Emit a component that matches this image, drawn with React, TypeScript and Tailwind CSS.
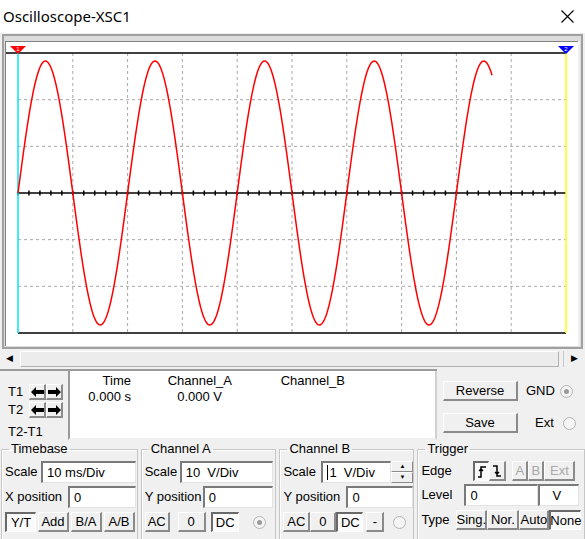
import React from 'react'

const PX0 = 18, PX1 = 566, PY0 = 53, PY1 = 333, MID = 193

function wavePath() {
  const pts: string[] = []
  for (let x = PX0; x <= 492; x += 1) {
    const y = MID - 132 * Math.sin((2 * Math.PI * (x - PX0)) / 109.6)
    pts.push(`${x === PX0 ? 'M' : 'L'}${x},${y.toFixed(2)}`)
  }
  return pts.join(' ')
}

function Screen() {
  const vx = Array.from({ length: 9 }, (_, i) => PX0 + ((PX1 - PX0) / 10) * (i + 1))
  const hy = [1, 2, 4, 5].map((i) => PY0 + ((PY1 - PY0) / 6) * i)
  const ticks = Array.from({ length: 50 }, (_, i) => PX0 + ((PX1 - PX0) / 50) * i)
  return (
    <svg width={572} height={304} viewBox="6 42 572 304" className="block">
      <rect x={6} y={42} width={572} height={304} fill="#fff" />
      {vx.map((x) => (
        <line key={x} x1={x} y1={PY0} x2={x} y2={PY1} stroke="#a8a8a8" strokeDasharray="3 3" />
      ))}
      {hy.map((y) => (
        <line key={y} x1={PX0} y1={y} x2={PX1} y2={y} stroke="#a8a8a8" strokeDasharray="3 3" />
      ))}
      <line x1={6} y1={PY0} x2={PX1} y2={PY0} stroke="#000" strokeWidth={1.5} />
      <line x1={PX0} y1={PY1} x2={PX1} y2={PY1} stroke="#000" strokeWidth={1.5} />
      <line x1={PX0} y1={MID} x2={PX1} y2={MID} stroke="#000" strokeWidth={1.5} />
      {ticks.map((x) => (
        <line key={x} x1={x} y1={MID - 2.5} x2={x} y2={MID + 2.5} stroke="#000" strokeWidth={1.5} />
      ))}
      <line x1={PX0} y1={PY0} x2={PX0} y2={PY1} stroke="#00e5ff" strokeWidth={1.5} />
      <line x1={PX1} y1={PY0} x2={PX1} y2={PY1} stroke="#ffff00" strokeWidth={1.5} />
      <path d={wavePath()} fill="none" stroke="#ff0000" strokeWidth={1.5} />
      <polygon points="10,46 26,46 18,54" fill="#ff0000" />
      <text x={18} y={51} fontSize={6} fill="#fff" textAnchor="middle" fontFamily="Liberation Sans">1</text>
      <polygon points="558,46 574,46 566,54" fill="#0000ff" />
      <text x={566} y={51} fontSize={6} fill="#fff" textAnchor="middle" fontFamily="Liberation Sans">2</text>
    </svg>
  )
}

function Btn({ children, w, pressed, disabled }: { children: React.ReactNode; w: number; pressed?: boolean; disabled?: boolean }) {
  return (
    <div
      style={{ width: w }}
      className={`h-[20px] flex items-center justify-center text-[13px] ${
        pressed
          ? 'bg-[#fafafa] border-t-2 border-l-2 border-b border-r border-t-[#696969] border-l-[#696969] border-b-white border-r-white'
          : 'bg-[#f0f0f0] border-t border-l border-b-2 border-r-2 border-t-white border-l-white border-b-[#8a8a8a] border-r-[#8a8a8a]'
      } ${disabled ? 'text-[#a8a8a8]' : 'text-black'}`}
    >
      {children}
    </div>
  )
}

function Field({ w, children, cursor }: { w: number; children?: React.ReactNode; cursor?: boolean }) {
  return (
    <div
      style={{ width: w }}
      className="h-[22px] bg-white border-t-2 border-l-2 border-b border-r border-t-[#7a7a7a] border-l-[#7a7a7a] border-b-[#e3e3e3] border-r-[#e3e3e3] flex items-center pl-[4px] text-[13px]"
    >
      {cursor && <span className="w-px h-[15px] bg-black mr-px" />}
      {children}
    </div>
  )
}

function Radio({ checked }: { checked?: boolean }) {
  return (
    <div className="w-[13px] h-[13px] rounded-full border border-[#b4b4b4] bg-[#f4f4f4] flex items-center justify-center">
      {checked && <div className="w-[5px] h-[5px] rounded-full bg-[#9a9a9a]" />}
    </div>
  )
}

function Group({ title, w, children }: { title: string; w: number; children: React.ReactNode }) {
  return (
    <fieldset style={{ width: w }} className="border border-b-0 border-[#c6c6c6] pt-[2px] pl-[3px] shadow-[inset_1px_1px_0_#fff]">
      <legend className="ml-[4px] px-[2px] text-[13px] leading-[14px]">{title}</legend>
      {children}
    </fieldset>
  )
}

function ArrowPair() {
  return (
    <div className="flex">
      {['←', '→'].map((a) => (
        <div key={a} className="w-[17px] h-[16px] bg-[#f0f0f0] border-t border-l border-b-2 border-r-2 border-t-white border-l-white border-b-[#8a8a8a] border-r-[#8a8a8a] flex items-center justify-center">
          <svg width={13} height={10} viewBox="0 0 13 10">
            {a === '←' ? (
              <path d="M0 5 L5 0 L5 3 L13 3 L13 7 L5 7 L5 10 Z" fill="#000" />
            ) : (
              <path d="M13 5 L8 0 L8 3 L0 3 L0 7 L8 7 L8 10 Z" fill="#000" />
            )}
          </svg>
        </div>
      ))}
    </div>
  )
}

export default function App() {
  return (
    <div className="w-[585px] h-[539px] overflow-hidden bg-[#f0f0f0] flex flex-col font-['Liberation_Sans',Arial,sans-serif] text-[13px] text-black">
      {/* title bar */}
      <div className="h-[33px] shrink-0 bg-white flex items-center justify-between pl-[3px] pr-[11px]">
        <span className="font-['Noto_Sans',sans-serif] text-[15px] text-black">Oscilloscope-XSC1</span>
        <svg width={13} height={13} viewBox="0 0 13 13">
          <path d="M0.5 0.5 L12.5 12.5 M12.5 0.5 L0.5 12.5" stroke="#000" strokeWidth={1.1} />
        </svg>
      </div>

      {/* screen frame */}
      <div className="mt-px mx-[2px] shrink-0 border-[2px] border-[#a0a0a0]">
        <div className="border border-[#dcdcdc] border-t-[5px]">
          <div className="border-t-[1px] border-l-[1px] border-[#808080] w-fit">
            <Screen />
          </div>
        </div>
      </div>

      {/* scrollbar */}
      <div className="mt-[2px] h-[16px] shrink-0 flex">
        <div className="w-[18px] flex items-center justify-center text-[9px]">◀</div>
        <div className="flex-1 ml-[2px] bg-[#ececec] border-t border-l border-b border-r border-t-white border-l-white border-b-[#b0b0b0] border-r-[#b0b0b0]" />
        <div className="w-[22px] ml-[4px] flex items-center justify-center text-[9px] border-l border-[#c8c8c8]">▶</div>
      </div>

      {/* cursor readout */}
      <div className="mt-[2px] h-[71px] shrink-0 flex">
        <div className="w-[437px] flex border-t-2 border-[#9a9a9a]">
          <div className="w-[68px] flex flex-col pl-[8px] pt-[12px] text-[13px]">
            <div className="flex items-center gap-[4px] h-[18px]"><span className="w-[17px]">T1</span><ArrowPair /></div>
            <div className="flex items-center gap-[4px] h-[18px]"><span className="w-[17px]">T2</span><ArrowPair /></div>
            <div className="mt-[3px]">T2-T1</div>
          </div>
          <div className="flex-1 bg-white border-l-2 border-b-2 border-r-2 border-l-[#9a9a9a] border-r-[#d0d0d0] border-b-[#f0f0f0] grid grid-cols-[61px_101px_113px] content-start pt-[2px] text-[13px] leading-[16px]">
            <div className="text-right">Time</div>
            <div className="text-right">Channel_A</div>
            <div className="text-right">Channel_B</div>
            <div className="text-right">0.000 s</div>
            <div className="text-right pr-[10px]">0.000 V</div>
            <div />
          </div>
        </div>
        <div className="flex-1 flex flex-col pl-[6px] pt-[12px] gap-[12px]">
          <div className="flex items-center">
            <Btn w={75}>Reverse</Btn>
            <span className="ml-[8px]">GND</span>
            <div className="ml-[5px]"><Radio checked /></div>
          </div>
          <div className="flex items-center">
            <Btn w={75}>Save</Btn>
            <span className="ml-[17px]">Ext</span>
            <div className="ml-[9px]"><Radio /></div>
          </div>
        </div>
      </div>

      {/* control groups */}
      <div className="mt-[2px] flex-1 flex gap-[3px] pl-[1px]">
        <Group title="Timebase" w={137}>
          <div className="flex items-center mt-[3px]"><span className="w-[36px]">Scale</span><Field w={95}>10 ms/Div</Field></div>
          <div className="flex items-center mt-[3px]"><span className="w-[63px]">X position</span><Field w={68}>0</Field></div>
          <div className="flex gap-[2px] mt-[4px]">
            <Btn w={31} pressed>Y/T</Btn><Btn w={31}>Add</Btn><Btn w={31}>B/A</Btn><Btn w={31}>A/B</Btn>
          </div>
        </Group>
        <Group title="Channel A" w={136}>
          <div className="flex items-center mt-[3px]"><span className="w-[35px]">Scale</span><Field w={93}>10&nbsp;&nbsp;V/Div</Field></div>
          <div className="flex items-center mt-[3px]"><span className="w-[58px]">Y position</span><Field w={70}>0</Field></div>
          <div className="flex items-center mt-[4px]">
            <Btn w={25}>AC</Btn><div className="ml-[8px]" /><Btn w={28}>0</Btn><div className="ml-[5px]" /><Btn w={28} pressed>DC</Btn>
            <div className="ml-[14px]"><Radio checked /></div>
          </div>
        </Group>
        <Group title="Channel B" w={134}>
          <div className="flex items-center mt-[3px]">
            <span className="w-[38px]">Scale</span>
            <Field w={70} cursor>1&nbsp;&nbsp;V/Div</Field>
            <div className="w-[22px] h-[22px] flex flex-col">
              <div className="flex-1 bg-[#f0f0f0] border-t border-l border-b border-r border-t-white border-l-white border-b-[#8a8a8a] border-r-[#8a8a8a] flex items-center justify-center text-[6px]">▲</div>
              <div className="flex-1 bg-[#f0f0f0] border-t border-l border-b border-r border-t-white border-l-white border-b-[#8a8a8a] border-r-[#8a8a8a] flex items-center justify-center text-[6px]">▼</div>
            </div>
          </div>
          <div className="flex items-center mt-[3px]"><span className="w-[63px]">Y position</span><Field w={67}>0</Field></div>
          <div className="flex items-center mt-[4px]">
            <Btn w={27}>AC</Btn><Btn w={26}>0</Btn><Btn w={27} pressed>DC</Btn><div className="ml-[3px]" /><Btn w={18}>-</Btn>
            <div className="ml-[9px]"><Radio /></div>
          </div>
        </Group>
        <Group title="Trigger" w={168}>
          <div className="flex items-center mt-[3px]">
            <span className="w-[52px]">Edge</span>
            <Btn w={16} pressed>
              <svg width={10} height={12} viewBox="0 0 10 12"><path d="M1 11 H4 V1 H9 M2 5 L4 3 L6 5" stroke="#000" fill="none" strokeWidth={1.5} /></svg>
            </Btn>
            <Btn w={17}>
              <svg width={10} height={12} viewBox="0 0 10 12"><path d="M1 1 H5 V11 H9 M3 7 L5 9 L7 7" stroke="#000" fill="none" strokeWidth={1.5} /></svg>
            </Btn>
            <div className="ml-[6px]" />
            <Btn w={16} disabled>A</Btn><Btn w={16} disabled>B</Btn><Btn w={31} disabled>Ext</Btn>
          </div>
          <div className="flex items-center mt-[3px]"><span className="w-[43px]">Level</span><Field w={74}>0</Field><Field w={41}><span className="pl-[8px]">V</span></Field></div>
          <div className="flex items-center mt-[4px]">
            <span className="w-[35px]">Type</span>
            <Btn w={31}>Sing.</Btn><Btn w={32}>Nor.</Btn><Btn w={30}>Auto</Btn><Btn w={32} pressed>None</Btn>
          </div>
        </Group>
      </div>
    </div>
  )
}
